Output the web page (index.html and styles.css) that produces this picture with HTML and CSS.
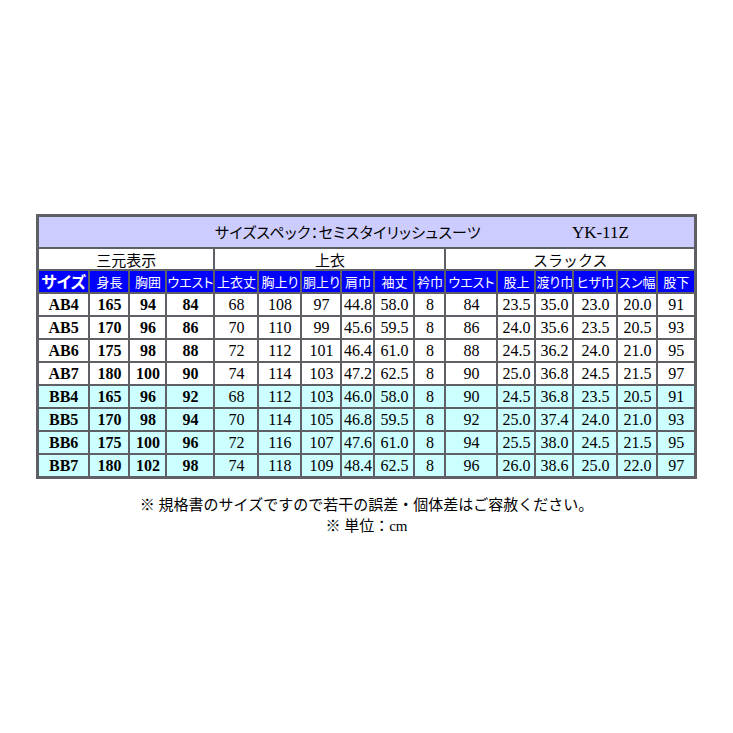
FILE: index.html
```html
<!DOCTYPE html>
<html lang="ja">
<head>
<meta charset="utf-8">
<title>サイズスペック</title>
<link rel="stylesheet" href="styles.css">
</head>
<body>
<div class="page">
<table class="spec">
<colgroup>
<col style="width:52px"><col style="width:40px"><col style="width:37px"><col style="width:48px">
<col style="width:44px"><col style="width:43px"><col style="width:40px"><col style="width:33px"><col style="width:40px"><col style="width:31px">
<col style="width:52px"><col style="width:38px"><col style="width:38px"><col style="width:44px"><col style="width:40px"><col style="width:38px">
</colgroup>
<tr class="title-row"><td colspan="16" class="title"><span class="title-jp">サイズスペック：セミスタイリッシュスーツ</span><span class="title-code">YK-11Z</span></td></tr>
<tr class="group-row"><td colspan="4">三元表示</td><td colspan="6">上衣</td><td colspan="6">スラックス</td></tr>
<tr class="head-row">
<td class="size-h">サイズ</td><td>身長</td><td>胸囲</td><td>ウエスト</td>
<td>上衣丈</td><td>胸上り</td><td>胴上り</td><td>肩巾</td><td>袖丈</td><td>衿巾</td>
<td>ウエスト</td><td>股上</td><td>渡り巾</td><td>ヒザ巾</td><td>スン幅</td><td>股下</td>
</tr>
<tr><td class="b">AB4</td><td class="b">165</td><td class="b">94</td><td class="b">84</td><td>68</td><td>108</td><td>97</td><td>44.8</td><td>58.0</td><td>8</td><td>84</td><td>23.5</td><td>35.0</td><td>23.0</td><td>20.0</td><td>91</td></tr>
<tr><td class="b">AB5</td><td class="b">170</td><td class="b">96</td><td class="b">86</td><td>70</td><td>110</td><td>99</td><td>45.6</td><td>59.5</td><td>8</td><td>86</td><td>24.0</td><td>35.6</td><td>23.5</td><td>20.5</td><td>93</td></tr>
<tr><td class="b">AB6</td><td class="b">175</td><td class="b">98</td><td class="b">88</td><td>72</td><td>112</td><td>101</td><td>46.4</td><td>61.0</td><td>8</td><td>88</td><td>24.5</td><td>36.2</td><td>24.0</td><td>21.0</td><td>95</td></tr>
<tr><td class="b">AB7</td><td class="b">180</td><td class="b">100</td><td class="b">90</td><td>74</td><td>114</td><td>103</td><td>47.2</td><td>62.5</td><td>8</td><td>90</td><td>25.0</td><td>36.8</td><td>24.5</td><td>21.5</td><td>97</td></tr>
<tr class="bb"><td class="b">BB4</td><td class="b">165</td><td class="b">96</td><td class="b">92</td><td>68</td><td>112</td><td>103</td><td>46.0</td><td>58.0</td><td>8</td><td>90</td><td>24.5</td><td>36.8</td><td>23.5</td><td>20.5</td><td>91</td></tr>
<tr class="bb"><td class="b">BB5</td><td class="b">170</td><td class="b">98</td><td class="b">94</td><td>70</td><td>114</td><td>105</td><td>46.8</td><td>59.5</td><td>8</td><td>92</td><td>25.0</td><td>37.4</td><td>24.0</td><td>21.0</td><td>93</td></tr>
<tr class="bb"><td class="b">BB6</td><td class="b">175</td><td class="b">100</td><td class="b">96</td><td>72</td><td>116</td><td>107</td><td>47.6</td><td>61.0</td><td>8</td><td>94</td><td>25.5</td><td>38.0</td><td>24.5</td><td>21.5</td><td>95</td></tr>
<tr class="bb"><td class="b">BB7</td><td class="b">180</td><td class="b">102</td><td class="b">98</td><td>74</td><td>118</td><td>109</td><td>48.4</td><td>62.5</td><td>8</td><td>96</td><td>26.0</td><td>38.6</td><td>25.0</td><td>22.0</td><td>97</td></tr>
</table>
<div class="notes">
<p>※ 規格書のサイズですので若干の誤差・個体差はご容赦ください。</p>
<p>※ 単位：cm</p>
</div>
</div>
</body>
</html>
```
FILE: styles.css
```css
html, body {
  margin: 0;
  padding: 0;
  background: #ffffff;
}
body {
  font-family: "Liberation Serif", "Noto Sans CJK JP", serif;
  font-size: 16px;
  color: #000;
}
.page {
  padding-top: 214px;
  display: flex;
  flex-direction: column;
  align-items: center;
}
.spec {
  border-collapse: collapse;
  table-layout: fixed;
  width: 658px;
  border: 3px solid #5e6066;
}
.spec td {
  border: 2px solid #5e6066;
  padding: 0;
  height: 21px;
  text-align: center;
  line-height: 19px;
  white-space: nowrap;
  overflow: hidden;
}
.title-row td {
  background: #ccccff;
  height: 30px;
  text-align: left;
  font-family: "Noto Sans CJK JP", sans-serif;
  font-size: 15px;
}
.title-jp {
  display: inline-block;
  width: 270px;
  margin-left: 176px;
  font-feature-settings: "palt";
  letter-spacing: 0.3px;
}
.title-code {
  display: inline-block;
  margin-left: 87px;
  font-family: "Liberation Serif", serif;
  font-size: 17px;
}
.group-row td {
  font-family: "Noto Sans CJK JP", sans-serif;
  font-size: 15px;
  height: 20px;
}
.head-row td {
  background: #0000ff;
  color: #ffffff;
  font-family: "Noto Sans CJK JP", sans-serif;
  font-size: 13px;
  font-feature-settings: "palt";
  height: 21px;
}
.head-row td.size-h {
  font-size: 16px;
  font-weight: bold;
}
.b {
  font-weight: bold;
}
.bb td {
  background: #ccffff;
}
.notes {
  margin-top: 16px;
  text-align: center;
  font-size: 15px;
}
.notes p {
  margin: 0;
  line-height: 21px;
}
```
